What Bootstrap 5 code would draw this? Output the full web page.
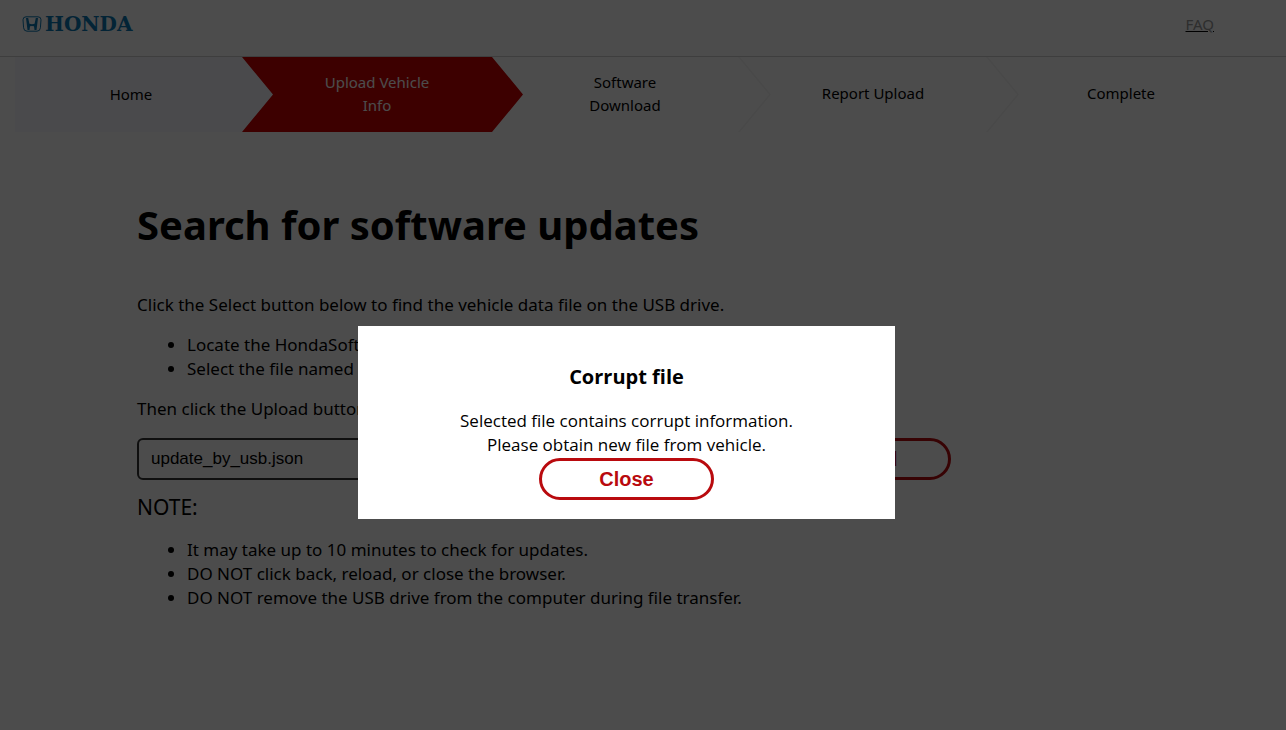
<!DOCTYPE html>
<html lang="en">
<head>
<meta charset="utf-8">
<meta name="viewport" content="width=device-width, initial-scale=1">
<title>Search for software updates</title>
<link href="https://cdn.jsdelivr.net/npm/bootstrap@5.3.0/dist/css/bootstrap.min.css" rel="stylesheet">
<style>
  :root { --brand-red: #cc0000; --button-red: #b90a0e; --ink: #000; }
  body { font-family: "Noto Sans", "Open Sans", sans-serif; font-size: 17px; line-height: 24px; color: var(--ink); overflow: hidden; }
  .site-header { height: 57px; padding: 0 72px 8px 22px; border-bottom: 1px solid #d0d0d0; }
  .brand-word { font-family: "DejaVu Serif", serif; font-weight: 700; font-size: 20px; line-height: 20px; color: #0a78b4; }
  .brand-link { color: #0a78b4; gap: 3px; }
  .faq-link { color: #999; text-decoration-color: #000; font-size: 15px; }

  .steps { padding: 0 39px 0 7px; }
  .step { position: relative; flex: 31 1 0; min-width: 0; height: 75px; margin: 0 -20px 0 -13px; padding: 0 22px 2px 11px; font-size: 15px; line-height: 23px; text-align: center; }
  .step span { max-width: 125px; }
  .step-home { flex-grow: 29; margin-left: 8px; padding: 0 28px 0 0; background: #f9f9fd; }
  .step-active { z-index: 1; color: #fff; background: var(--brand-red); clip-path: polygon(0 0, calc(100% - 31px) 0, 100% 50%, calc(100% - 31px) 100%, 0 100%, 31px 50%); }
  .step-next::after { content: ""; position: absolute; top: 0; right: 0; width: 33px; height: 100%; background: #f5f5f5; clip-path: polygon(0 0, 2px 0, 100% 50%, 2px 100%, 0 100%, calc(100% - 2px) 50%); }

  main { padding: 67px 136px 0 137px; }
  h1 { font-size: 40px; line-height: 52px; font-weight: 700; margin-bottom: 42px; }
  main p, main ul { margin-bottom: 16px; }
  main ul { padding-left: 50px; }
  .upload-row { max-width: 814px; margin-top: 17px; }
  .file-box { min-width: 0; height: 42px; padding: 0 12px; border: 2px solid #333; border-radius: 6px; font-family: "Liberation Sans", sans-serif; font-size: 17px; color: #000; }
  .btn-pill { width: 175px; height: 42px; padding: 0; border: 3px solid var(--button-red); border-radius: 21px; background: #fff; color: var(--button-red); font-family: "Liberation Sans", sans-serif; font-weight: 700; font-size: 20px; line-height: 24px; }
  .btn-pill:hover { background: var(--button-red); color: #fff; }
  .note-title { font-size: 21px; line-height: 28px; font-weight: 400; margin: 13px 0 17px; }

  .shade { background: rgba(0, 0, 0, .7); padding: 115px 33px 0 0; }
  .notice { width: 537px; padding: 37px 24px 19px; background: #fff; font-family: "Open Sans", "Noto Sans", sans-serif; }
  .notice h2 { font-size: 20px; line-height: 28px; font-weight: 700; margin-bottom: 18px; }
  .notice-text { margin-bottom: 1px; }
</style>
</head>
<body>
<header class="site-header d-flex align-items-center justify-content-between">
  <a href="#" class="brand-link d-flex align-items-center text-decoration-none">
    <svg width="20" height="16" viewBox="0 0 20 16" fill="none" stroke="currentColor" aria-hidden="true">
      <path d="M4 .8h12q3 0 3 3l-.6 8q-.3 3.400-3.400 3.400H5q-3.100 0-3.400-3.400L1 3.800Q1 .8 4 .8Z" stroke-width="1"/>
      <path d="M4 2h2.200l1.200 5.800q2.600.9 5.200 0L13.800 2H16l-1.500 12h-2l-.5-3.800q-2-.6-4 0L7.500 14h-2Z" fill="currentColor" stroke="none"/>
    </svg>
    <span class="brand-word">HONDA</span>
  </a>
  <a href="#" class="faq-link">FAQ</a>
</header>

<nav class="steps d-flex" aria-label="Progress">
  <div class="step step-home d-flex align-items-center justify-content-center"><span>Home</span></div>
  <div class="step step-active d-flex align-items-center justify-content-center" aria-current="step"><span>Upload Vehicle Info</span></div>
  <div class="step step-next d-flex align-items-center justify-content-center"><span>Software Download</span></div>
  <div class="step step-next d-flex align-items-center justify-content-center"><span>Report Upload</span></div>
  <div class="step d-flex align-items-center justify-content-center"><span>Complete</span></div>
</nav>

<main>
  <h1>Search for software updates</h1>
  <p>Click the Select button below to find the vehicle data file on the USB drive.</p>
  <ul>
    <li>Locate the HondaSoftwareUpdate folder</li>
    <li>Select the file named update_by_usb.json</li>
  </ul>
  <p>Then click the Upload button.</p>
  <div class="upload-row d-flex align-items-center gap-2">
    <input class="file-box flex-grow-1" type="text" value="update_by_usb.json" aria-label="Vehicle data file" readonly>
    <button type="button" class="btn btn-pill">Upload</button>
  </div>
  <h2 class="note-title">NOTE:</h2>
  <ul>
    <li>It may take up to 10 minutes to check for updates.</li>
    <li>DO NOT click back, reload, or close the browser.</li>
    <li>DO NOT remove the USB drive from the computer during file transfer.</li>
  </ul>
</main>

<div class="modal shade d-flex align-items-center justify-content-center" role="dialog" aria-modal="true" aria-labelledby="notice-title">
  <div class="notice text-center">
    <h2 id="notice-title">Corrupt file</h2>
    <div class="notice-text">Selected file contains corrupt information.<br>Please obtain new file from vehicle.</div>
    <button type="button" class="btn btn-pill">Close</button>
  </div>
</div>
<script src="https://cdn.jsdelivr.net/npm/bootstrap@5.3.0/dist/js/bootstrap.bundle.min.js"></script>
</body>
</html>
